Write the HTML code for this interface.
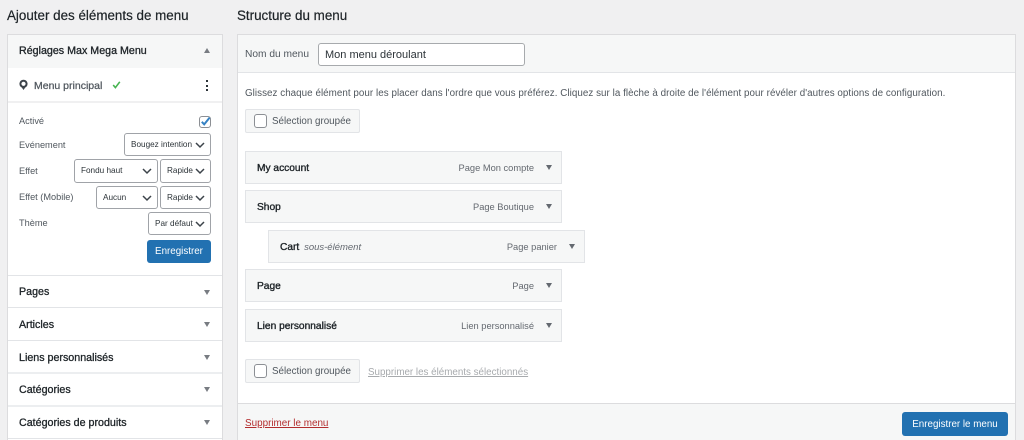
<!DOCTYPE html>
<html lang="fr"><head><meta charset="utf-8"><title>Menus</title>
<style>
*{box-sizing:border-box}
html,body{margin:0;padding:0;width:1024px;height:440px;overflow:hidden}
body{background:#f0f0f1;position:relative;font-family:"Liberation Sans",Arial,sans-serif;color:#3c434a}
#w{position:absolute;left:0;top:0;width:1024px;height:440px;overflow:hidden;filter:blur(.3px)}
.a,.t{position:absolute}
.t{white-space:nowrap;line-height:16px}
.b{font-size:10.7px;color:#1d2327;font-weight:400;-webkit-text-stroke:.3px #1d2327}
.l{font-size:9.2px;color:#50575e}
.sel{position:absolute;height:24px;background:#fff;border:1px solid #a0a3a8;border-radius:3px;font-size:8.2px;color:#2c3338;line-height:22px;padding-left:6px;white-space:nowrap;overflow:hidden}
.sel svg{position:absolute;right:4px;top:5px}
.tri{position:absolute;width:0;height:0;border-left:3.5px solid transparent;border-right:3.5px solid transparent;border-top:5px solid #787c82}
.tri.up{border-top:0;border-bottom:5px solid #787c82}
.sep{position:absolute;left:8px;width:214px;height:1px;background:#e2e4e7}
.item{position:absolute;width:317px;height:33px;background:#f6f7f7;border:1px solid #e2e4e7}
.item .n{position:absolute;left:11px;top:9px;font-size:10.2px;font-weight:400;-webkit-text-stroke:.35px #1d2327;color:#1d2327;line-height:16px;white-space:nowrap}
.item .r{position:absolute;right:27px;top:8px;font-size:9.3px;color:#646970;line-height:16px;white-space:nowrap}
.item .tri{right:9px;top:13px;border-top-color:#646970}
.bulk{position:absolute;left:245px;width:115px;height:24px;background:#f6f7f7;border:1px solid #e2e4e7;border-radius:2px}
.bulk i{position:absolute;left:8px;top:4px;width:13px;height:14px;background:#fff;border:1px solid #8c8f94;border-radius:3px}
.bulk span{position:absolute;left:26px;top:4px;font-size:9.8px;color:#50575e;line-height:16px;white-space:nowrap}
.btn{position:absolute;background:#2271b1;border-radius:3px;color:#fff;text-align:center;font-size:9.8px}
</style></head>
<body><div id="w">
<div class="t" style="left:7px;top:8px;font-size:13.4px;color:#1d2327;-webkit-text-stroke:.2px #1d2327">Ajouter des éléments de menu</div>
<div class="t" style="left:237px;top:8px;font-size:13.4px;color:#1d2327;-webkit-text-stroke:.2px #1d2327">Structure du menu</div>

<!-- Left panel -->
<div class="a" style="left:7px;top:34px;width:216px;height:406px;background:#fff;border:1px solid #dcdcde;border-bottom:0"></div>
<div class="a" style="left:8px;top:35px;width:214px;height:33px;background:#f6f7f7"></div>
<div class="t b" style="left:19px;top:43px">Réglages Max Mega Menu</div>
<div class="tri up" style="left:204px;top:48px"></div>
<div class="a" style="left:8px;top:101px;width:214px;height:2px;background:#f0f0f1"></div>

<svg class="a" style="left:18px;top:79px" width="11" height="12" viewBox="0 0 11 12"><circle cx="5.5" cy="4.8" r="3.1" fill="none" stroke="#3c434a" stroke-width="2"/><path d="M3.2 7.6L5.5 11L7.8 7.6Z" fill="#3c434a"/></svg>
<div class="t" style="left:34px;top:78px;font-size:10.5px;color:#50575e;-webkit-text-stroke:.25px #50575e">Menu principal</div>
<svg class="a" style="left:112px;top:80px" width="9" height="10" viewBox="0 0 9 10"><path d="M1.2 5L3.4 7.6L7.8 1.8" fill="none" stroke="#46b450" stroke-width="1.6"/></svg>
<div class="a" style="left:206px;top:79.5px;width:2px;height:2px;background:#2c3338"></div>
<div class="a" style="left:206px;top:84.5px;width:2px;height:2px;background:#2c3338"></div>
<div class="a" style="left:206px;top:88.5px;width:2px;height:2px;background:#2c3338"></div>

<div class="t l" style="left:19px;top:113px">Activé</div>
<div class="a" style="left:199px;top:116px;width:12px;height:12px;background:#fff;border:1px solid #8c8f94;border-radius:3px"></div>
<svg class="a" style="left:199px;top:115px" width="13" height="13" viewBox="0 0 13 13"><path d="M2.8 6.8L5.2 9.4L10.6 2.6" fill="none" stroke="#3582c4" stroke-width="2"/></svg>

<div class="t l" style="left:19px;top:137px">Evénement</div>
<div class="sel" style="left:124px;top:133px;width:87px;height:23px;line-height:22px">Bougez intention<svg width="12" height="12" viewBox="0 0 12 12"><path d="M2 4L6 8L10 4" fill="none" stroke="#3c434a" stroke-width="1.5"/></svg></div>

<div class="t l" style="left:19px;top:163px">Effet</div>
<div class="sel" style="left:74px;top:159px;width:84px">Fondu haut<svg width="12" height="12" viewBox="0 0 12 12"><path d="M2 4L6 8L10 4" fill="none" stroke="#3c434a" stroke-width="1.5"/></svg></div>
<div class="sel" style="left:160px;top:159px;width:51px">Rapide<svg width="12" height="12" viewBox="0 0 12 12"><path d="M2 4L6 8L10 4" fill="none" stroke="#3c434a" stroke-width="1.5"/></svg></div>

<div class="t l" style="left:19px;top:189px">Effet (Mobile)</div>
<div class="sel" style="left:96px;top:186px;width:62px;height:23px;line-height:21px">Aucun<svg width="12" height="12" viewBox="0 0 12 12"><path d="M2 4L6 8L10 4" fill="none" stroke="#3c434a" stroke-width="1.5"/></svg></div>
<div class="sel" style="left:160px;top:186px;width:51px;height:23px;line-height:21px">Rapide<svg width="12" height="12" viewBox="0 0 12 12"><path d="M2 4L6 8L10 4" fill="none" stroke="#3c434a" stroke-width="1.5"/></svg></div>

<div class="t l" style="left:19px;top:215px">Thème</div>
<div class="sel" style="left:148px;top:212px;width:63px;height:23px;line-height:21px">Par défaut<svg width="12" height="12" viewBox="0 0 12 12"><path d="M2 4L6 8L10 4" fill="none" stroke="#3c434a" stroke-width="1.5"/></svg></div>

<div class="btn" style="left:147px;top:240px;width:64px;height:23px;line-height:24px">Enregistrer</div>

<div class="sep" style="top:275px"></div>
<div class="t b" style="left:19px;top:284px">Pages</div><div class="tri" style="left:204px;top:290px"></div>
<div class="sep" style="top:307px"></div>
<div class="t b" style="left:19px;top:317px">Articles</div><div class="tri" style="left:204px;top:322px"></div>
<div class="sep" style="top:340px"></div>
<div class="t b" style="left:19px;top:350px">Liens personnalisés</div><div class="tri" style="left:204px;top:355px"></div>
<div class="sep" style="top:372px;height:2px;background:#eceef0"></div>
<div class="t b" style="left:19px;top:382px">Catégories</div><div class="tri" style="left:204px;top:387px"></div>
<div class="sep" style="top:405px;height:2px;background:#eceef0"></div>
<div class="t b" style="left:19px;top:415px">Catégories de produits</div><div class="tri" style="left:204px;top:420px"></div>
<div class="sep" style="top:438px"></div>

<!-- Right panel -->
<div class="a" style="left:237px;top:34px;width:779px;height:406px;background:#fff;border:1px solid #dcdcde;border-bottom:0"></div>
<div class="a" style="left:238px;top:35px;width:777px;height:38px;background:#f6f7f7;border-bottom:1px solid #e2e4e7"></div>
<div class="t" style="left:245px;top:47px;font-size:10.2px;color:#50575e">Nom du menu</div>
<div class="a" style="left:318px;top:43px;width:207px;height:23px;background:#fff;border:1px solid #a7aaad;border-radius:3px"></div>
<div class="t" style="left:325px;top:47px;font-size:11px;color:#2c3338">Mon menu déroulant</div>

<div class="t" style="left:245px;top:86px;font-size:9.8px;color:#50575e;letter-spacing:.05px">Glissez chaque élément pour les placer dans l'ordre que vous préférez. Cliquez sur la flèche à droite de l'élément pour révéler d'autres options de configuration.</div>

<div class="bulk" style="top:109px"><i></i><span>Sélection groupée</span></div>

<div class="item" style="left:245px;top:151px"><div class="n">My account</div><div class="r">Page Mon compte</div><div class="tri"></div></div>
<div class="item" style="left:245px;top:190px"><div class="n">Shop</div><div class="r">Page Boutique</div><div class="tri"></div></div>
<div class="item" style="left:268px;top:230px"><div class="n">Cart <span style="font-weight:400;font-style:italic;color:#646970;-webkit-text-stroke:0;margin-left:2px;font-size:9.5px">sous-élément</span></div><div class="r">Page panier</div><div class="tri"></div></div>
<div class="item" style="left:245px;top:269px"><div class="n">Page</div><div class="r">Page</div><div class="tri"></div></div>
<div class="item" style="left:245px;top:309px"><div class="n">Lien personnalisé</div><div class="r">Lien personnalisé</div><div class="tri"></div></div>

<div class="bulk" style="top:359px"><i></i><span>Sélection groupée</span></div>
<div class="t" style="left:368px;top:365px;font-size:9.8px;color:#a7aaad;text-decoration:underline">Supprimer les éléments sélectionnés</div>

<div class="a" style="left:238px;top:403px;width:777px;height:37px;background:#f6f7f7;border-top:1px solid #dcdcde"></div>
<div class="t" style="left:245px;top:416px;font-size:9.9px;color:#b32d2e;text-decoration:underline">Supprimer le menu</div>
<div class="btn" style="left:902px;top:412px;width:106px;height:24px;line-height:25px">Enregistrer le menu</div>
</div></body></html>
